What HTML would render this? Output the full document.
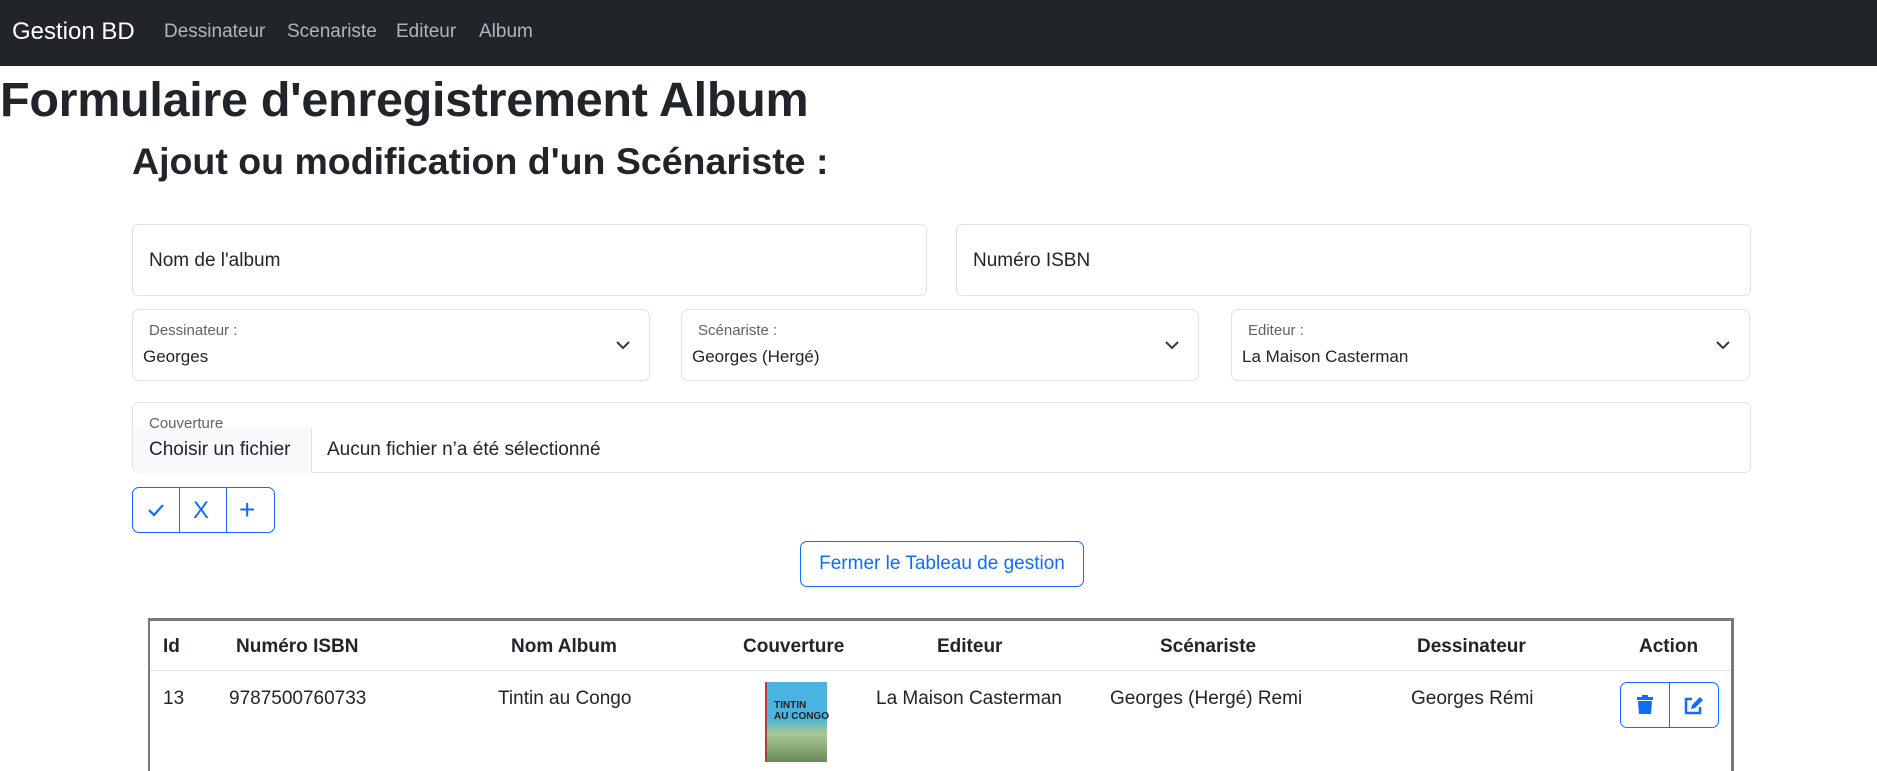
<!DOCTYPE html>
<html><head><meta charset="utf-8"><style>
*{box-sizing:border-box;margin:0;padding:0}
body{width:1877px;height:771px;overflow:hidden;background:#fff;font-family:"Liberation Sans",sans-serif;color:#212529;position:relative}
.a{position:absolute;white-space:nowrap}
.nav{position:absolute;left:0;top:0;width:1877px;height:66px;background:#212529}
.box{position:absolute;border:1px solid #dee2e6;border-radius:7px;background:#fff}
.lbl{position:absolute;font-size:15px;color:#5c636a}
.val{position:absolute;font-size:17px}
.chev{position:absolute;right:18px;top:27px}
.btn{position:absolute;border:1.5px solid #0d6efd;border-radius:7px;color:#0d6efd}
th,td{position:absolute;white-space:nowrap;font-size:19px}
</style></head><body>
<div class="nav"></div>
<div class="a" style="left:12px;top:18px;font-size:24px;color:#fff">Gestion BD</div>
<div class="a" style="left:164px;top:21px;font-size:19px;color:#adb5bd">Dessinateur</div>
<div class="a" style="left:287px;top:21px;font-size:19px;color:#adb5bd">Scenariste</div>
<div class="a" style="left:396px;top:21px;font-size:19px;color:#adb5bd">Editeur</div>
<div class="a" style="left:479px;top:21px;font-size:19px;color:#adb5bd">Album</div>

<div class="a" style="left:0;top:72px;font-size:48.5px;font-weight:bold;letter-spacing:-0.3px">Formulaire d'enregistrement Album</div>
<div class="a" style="left:132px;top:140px;font-size:37.5px;font-weight:bold">Ajout ou modification d'un Scénariste :</div>

<div class="box" style="left:132px;top:224px;width:795px;height:72px"><span class="val" style="left:16px;top:25px;font-size:19px">Nom de l'album</span></div>
<div class="box" style="left:956px;top:224px;width:795px;height:72px"><span class="val" style="left:16px;top:25px;font-size:19px">Numéro ISBN</span></div>

<div class="box" style="left:132px;top:309px;width:518px;height:72px"><span class="lbl" style="left:16px;top:12px">Dessinateur :</span><span class="val" style="left:10px;top:37px">Georges</span><svg class="chev" width="16" height="16" viewBox="0 0 16 16"><path d="M2 5l6 6 6-6" fill="none" stroke="#343a40" stroke-width="2"/></svg></div>
<div class="box" style="left:681px;top:309px;width:518px;height:72px"><span class="lbl" style="left:16px;top:12px">Scénariste :</span><span class="val" style="left:10px;top:37px">Georges (Hergé)</span><svg class="chev" width="16" height="16" viewBox="0 0 16 16"><path d="M2 5l6 6 6-6" fill="none" stroke="#343a40" stroke-width="2"/></svg></div>
<div class="box" style="left:1231px;top:309px;width:519px;height:72px"><span class="lbl" style="left:16px;top:12px">Editeur :</span><span class="val" style="left:10px;top:37px">La Maison Casterman</span><svg class="chev" width="16" height="16" viewBox="0 0 16 16"><path d="M2 5l6 6 6-6" fill="none" stroke="#343a40" stroke-width="2"/></svg></div>

<div class="box" style="left:132px;top:402px;width:1619px;height:71px">
<span class="lbl" style="left:16px;top:12px">Couverture</span>
<div style="position:absolute;left:0;top:25px;width:179px;height:45px;background:#f8f9fa;border-right:1px solid #dee2e6;border-bottom-left-radius:7px"></div>
<span class="val" style="left:16px;top:36px;font-size:19px">Choisir un fichier</span>
<span class="val" style="left:194px;top:36px;font-size:19px">Aucun fichier n’a été sélectionné</span>
</div>

<div class="btn" style="left:132px;top:487px;width:143px;height:46px">
<div style="position:absolute;left:46px;top:0;width:1px;height:44px;background:#0d6efd"></div>
<div style="position:absolute;left:93px;top:0;width:1px;height:44px;background:#0d6efd"></div>
<svg style="position:absolute;left:14px;top:14px" width="18" height="16" viewBox="0 0 18 16"><path d="M2 8l5 5 9-10" fill="none" stroke="#0d6efd" stroke-width="2.2"/></svg>
<div style="position:absolute;left:60px;top:9px;font-size:24px">X</div>
<div style="position:absolute;left:106px;top:6px;font-size:28px">+</div>
</div>

<div class="btn" style="left:800px;top:541px;width:284px;height:46px;font-size:19px;text-align:center;line-height:43px">Fermer le Tableau de gestion</div>

<div style="position:absolute;left:148px;top:618px;width:1586px;height:3px;background:#7a7a7a"></div>
<div style="position:absolute;left:148px;top:618px;width:2px;height:153px;background:#7a7a7a"></div>
<div style="position:absolute;left:1731px;top:618px;width:3px;height:153px;background:#7a7a7a"></div>
<div style="position:absolute;left:150px;top:670px;width:1581px;height:1px;background:#dee2e6"></div>
<table>
<tr style="font-weight:bold">
<th class="a" style="left:163px;top:636px">Id</th>
<th class="a" style="left:236px;top:636px">Numéro ISBN</th>
<th class="a" style="left:511px;top:636px">Nom Album</th>
<th class="a" style="left:743px;top:636px">Couverture</th>
<th class="a" style="left:937px;top:636px">Editeur</th>
<th class="a" style="left:1160px;top:636px">Scénariste</th>
<th class="a" style="left:1417px;top:636px">Dessinateur</th>
<th class="a" style="left:1639px;top:636px">Action</th>
</tr>
<tr>
<td class="a" style="left:163px;top:688px">13</td>
<td class="a" style="left:229px;top:688px">9787500760733</td>
<td class="a" style="left:498px;top:688px">Tintin au Congo</td>
<td class="a" style="left:876px;top:688px">La Maison Casterman</td>
<td class="a" style="left:1110px;top:688px">Georges (Hergé) Remi</td>
<td class="a" style="left:1411px;top:688px">Georges Rémi</td>
</tr></table>
<div style="position:absolute;left:765px;top:682px;width:62px;height:80px;background:linear-gradient(#4ab3e0 0%,#4ab3e0 45%,#a8c890 65%,#6a8a60 100%);border-left:2px solid #c0392b"></div>
<div class="a" style="left:774px;top:700px;font-size:10px;font-weight:bold;color:#222">TINTIN<br>AU CONGO</div>

<div class="btn" style="left:1620px;top:682px;width:99px;height:46px">
<div style="position:absolute;left:48px;top:0;width:1px;height:44px;background:#0d6efd"></div>
<svg style="position:absolute;left:15px;top:12px" width="18" height="20" viewBox="0 0 18 20"><rect x="1" y="2" width="16" height="3" fill="#0d6efd"/><rect x="6" y="0" width="6" height="3" fill="#0d6efd"/><path d="M2 6h14l-1 13H3z" fill="#0d6efd"/></svg>
<svg style="position:absolute;left:62px;top:12px" width="22" height="20" viewBox="0 0 22 20"><path d="M9 4H3v14h14v-6" fill="none" stroke="#0d6efd" stroke-width="2.5"/><path d="M8 14l1-4 8-8 3 3-8 8z" fill="#0d6efd"/></svg>
</div>
</body></html>
